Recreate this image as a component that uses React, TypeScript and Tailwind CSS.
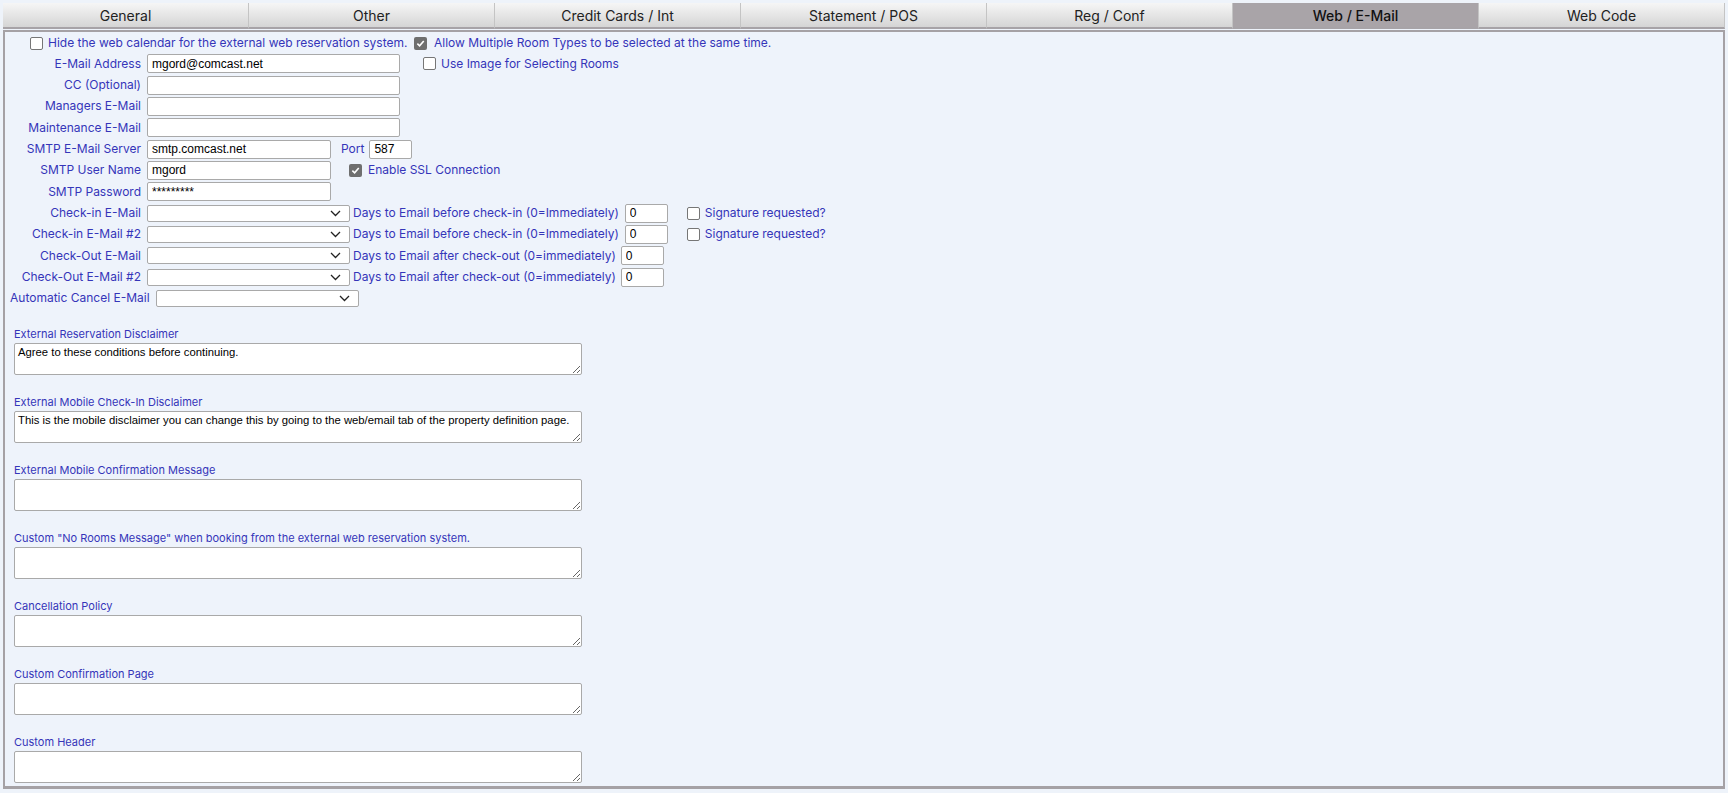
import React from 'react';

const tabs = ['General', 'Other', 'Credit Cards / Int', 'Statement / POS', 'Reg / Conf', 'Web / E-Mail', 'Web Code'];
const activeTab = 'Web / E-Mail';

const lbl = "text-[12px] text-[#3535b9] whitespace-nowrap";
const inputCls = "h-[19px] bg-white border border-[#a9a9a9] rounded-[2px] px-[4px] text-[12px] text-black outline-none font-['Liberation_Sans',Arial,sans-serif]";

const CheckBox: React.FC<{ checked?: boolean }> = ({ checked }) => (
  checked ? (
    <span className="w-[13px] h-[13px] rounded-[2px] bg-[#6f6f6f] flex items-center justify-center shrink-0">
      <svg width="9" height="9" viewBox="0 0 10 10"><path d="M1.5 5.2 L4 7.6 L8.6 2.3" stroke="white" strokeWidth="1.8" fill="none" /></svg>
    </span>
  ) : (
    <span className="w-[13px] h-[13px] rounded-[2px] bg-white border border-[#767676] shrink-0" />
  )
);

const Select: React.FC<{ className?: string }> = ({ className }) => (
  <div className={`relative h-[17px] bg-white border border-[#a9a9a9] rounded-[2px] ${className ?? ''}`}>
    <svg className="absolute right-[8px] top-[4px]" width="11" height="7" viewBox="0 0 11 7">
      <path d="M1 1 L5.5 5.5 L10 1" stroke="#222" strokeWidth="1.3" fill="none" />
    </svg>
  </div>
);

const Row: React.FC<{ label: string; children: React.ReactNode }> = ({ label, children }) => (
  <div className="flex items-center h-[21.35px]">
    <div className={`w-[142px] pr-[6px] text-right ${lbl}`}>{label}</div>
    {children}
  </div>
);

const DaysRow: React.FC<{ label: string; days: string; sig?: boolean; inputMl: string }> = ({ label, days, sig, inputMl }) => (
  <Row label={label}>
    <Select className="w-[203px]" />
    <span className={`ml-[3px] ${lbl}`}>{days}</span>
    <input className={`${inputCls} w-[43px] ${inputMl}`} defaultValue="0" />
    {sig && (
      <div className="flex items-center ml-[19px]">
        <CheckBox />
        <span className={`ml-[5px] ${lbl}`}>Signature requested?</span>
      </div>
    )}
  </Row>
);

const areas: { label: string; value: string }[] = [
  { label: 'External Reservation Disclaimer', value: 'Agree to these conditions before continuing.' },
  { label: 'External Mobile Check-In Disclaimer', value: 'This is the mobile disclaimer you can change this by going to the web/email tab of the property definition page.' },
  { label: 'External Mobile Confirmation Message', value: '' },
  { label: 'Custom "No Rooms Message" when booking from the external web reservation system.', value: '' },
  { label: 'Cancellation Policy', value: '' },
  { label: 'Custom Confirmation Page', value: '' },
  { label: 'Custom Header', value: '' },
];

export default function App() {
  return (
    <div className="w-[1728px] h-[793px] bg-[#eef3fa] font-['Inter','Noto_Sans',sans-serif] overflow-hidden">
      <div className="flex pt-[3px] px-[3px]">
        {tabs.map((t) => (
          <div
            key={t}
            className={`flex-1 h-[26px] flex items-center justify-center text-[14px] border-r border-[#c4c4c4] border-b-[2px] border-b-[#a7a3a7] ${
              t === activeTab
                ? 'bg-[#a9a4a8] text-[#111] font-medium'
                : 'bg-gradient-to-b from-[#f6f6f6] to-[#d5d5d5] text-[#222]'
            }`}
          >
            {t}
          </div>
        ))}
      </div>

      <div className="mx-[3px] mt-[1px] border-[2px] border-b-[3px] border-[#a5a1a5] bg-[#eef3fb] pt-[3px] pb-[3px]">
        <div className="flex items-center h-[16px]">
          <div className="w-[409px] shrink-0 flex items-center pl-[25px]">
            <CheckBox />
            <span className={`ml-[5px] ${lbl}`}>Hide the web calendar for the external web reservation system.</span>
          </div>
          <CheckBox checked />
          <span className={`ml-[7px] ${lbl}`}>Allow Multiple Room Types to be selected at the same time.</span>
        </div>

        <div className="mt-[2px]">
          <Row label="E-Mail Address">
            <input className={`${inputCls} w-[253px]`} defaultValue="mgord@comcast.net" />
            <div className="flex items-center ml-[23px]">
              <CheckBox />
              <span className={`ml-[5px] ${lbl}`}>Use Image for Selecting Rooms</span>
            </div>
          </Row>
          <Row label="CC (Optional)">
            <input className={`${inputCls} w-[253px]`} defaultValue="" />
          </Row>
          <Row label="Managers E-Mail">
            <input className={`${inputCls} w-[253px]`} defaultValue="" />
          </Row>
          <Row label="Maintenance E-Mail">
            <input className={`${inputCls} w-[253px]`} defaultValue="" />
          </Row>
          <Row label="SMTP E-Mail Server">
            <input className={`${inputCls} w-[184px]`} defaultValue="smtp.comcast.net" />
            <span className={`ml-[10px] ${lbl}`}>Port</span>
            <input className={`${inputCls} w-[43px] ml-[5px]`} defaultValue="587" />
          </Row>
          <Row label="SMTP User Name">
            <input className={`${inputCls} w-[184px]`} defaultValue="mgord" />
            <div className="flex items-center ml-[18px]">
              <CheckBox checked />
              <span className={`ml-[6px] ${lbl}`}>Enable SSL Connection</span>
            </div>
          </Row>
          <Row label="SMTP Password">
            <input className={`${inputCls} w-[184px]`} defaultValue="*********" />
          </Row>
          <DaysRow label="Check-in E-Mail" days="Days to Email before check-in (0=Immediately)" sig inputMl="ml-[6px]" />
          <DaysRow label="Check-in E-Mail #2" days="Days to Email before check-in (0=Immediately)" sig inputMl="ml-[6px]" />
          <DaysRow label="Check-Out E-Mail" days="Days to Email after check-out (0=immediately)" inputMl="ml-[5px]" />
          <DaysRow label="Check-Out E-Mail #2" days="Days to Email after check-out (0=immediately)" inputMl="ml-[5px]" />
          <div className="flex items-center h-[21.35px] pl-[5px]">
            <span className={lbl}>Automatic Cancel E-Mail</span>
            <Select className="w-[203px] ml-[6px]" />
          </div>
        </div>

        <div className="mt-[18px] pl-[9px] flex flex-col gap-[20px]">
          {areas.map((a) => (
            <div key={a.label}>
              <div className="text-[11px] leading-[14px] text-[#3535b9]">{a.label}</div>
              <textarea
                className="mt-[2px] block w-[568px] h-[32px] bg-white border border-[#a9a9a9] rounded-[2px] px-[3px] py-[1px] text-[11.3px] leading-[15px] text-black outline-none font-['Liberation_Sans',Arial,sans-serif]"
                defaultValue={a.value}
              />
            </div>
          ))}
        </div>
      </div>
    </div>
  );
}
